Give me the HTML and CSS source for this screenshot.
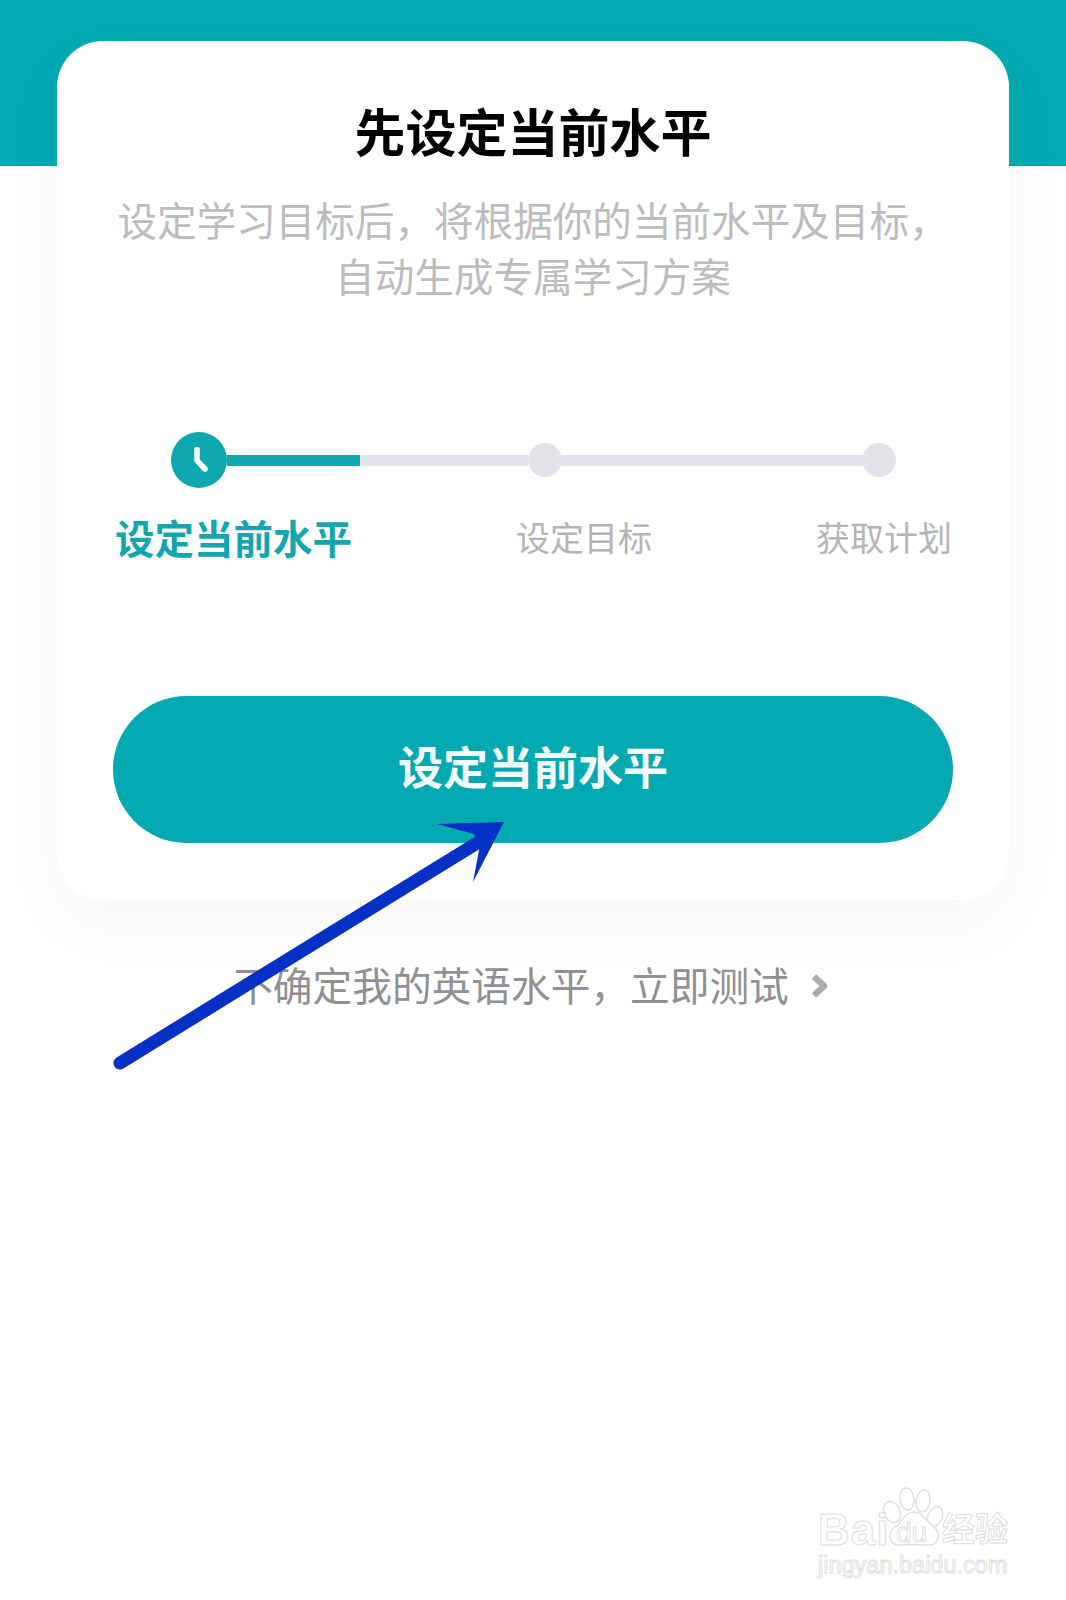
FILE: index.html
```html
<!DOCTYPE html>
<html lang="zh-CN">
  <head>
    <meta charset="UTF-8" />
    <meta name="viewport" content="width=device-width, initial-scale=1.0" />
    <title>先设定当前水平</title>
    <link rel="stylesheet" href="styles.css">
  </head>
  <body>
    <div class="page">
      <div class="band"></div>

      <div class="card">
        <h1>先设定当前水平</h1>
        <p class="intro">设定学习目标后，将根据你的当前水平及目标，<br />自动生成专属学习方案</p>

        <div class="track">
          <span class="step-icon">
            <svg width="56" height="56" viewBox="0 0 56 56">
              <path class="clock-hand" d="M26 17.5 L26 28.5 L34 37" />
            </svg>
          </span>
          <span class="bar bar-done"></span>
          <span class="bar bar-todo-a"></span>
          <span class="dot"></span>
          <span class="bar bar-todo-b"></span>
          <span class="dot"></span>
        </div>

        <div class="labels">
          <span class="label label-active">设定当前水平</span>
          <span class="label">设定目标</span>
          <span class="label">获取计划</span>
        </div>

        <button class="start" type="button">设定当前水平</button>
      </div>

      <a class="test-link">
        <span>不确定我的英语水平，立即测试</span>
        <svg width="18" height="26" viewBox="0 0 18 26">
          <path class="chevron" d="M4 3.5 L14 13 L4 22.5" />
        </svg>
      </a>

      <!-- annotation drawn over the screenshot -->
      <svg class="arrow" width="1066" height="1600" viewBox="0 0 1066 1600">
        <path class="arrow-line" d="M120 1063 L482 840" />
        <path class="arrow-head" d="M504 822 L437 824 L474 834 L480 845 L473 882 Z" />
      </svg>

      <div class="watermark">
        <svg class="paw" width="72" height="72" viewBox="0 0 72 72">
          <ellipse cx="7" cy="27" rx="8" ry="11" transform="rotate(-25 7 27)" />
          <ellipse cx="22" cy="14" rx="7" ry="11" transform="rotate(-8 22 14)" />
          <ellipse cx="38" cy="16" rx="7" ry="11" transform="rotate(10 38 16)" />
          <ellipse cx="50" cy="32" rx="7" ry="11" transform="rotate(25 50 32)" />
          <path d="M29 27 C38 27 42 38 50 43 C56 48 54 60 44 60 C36 60 24 59 14 60 C4 60 2 48 10 42 C17 38 20 27 29 27 Z" />
        </svg>
        <div class="wm-row">
          <span class="wm-bai">Bai</span>
          <span class="wm-du">du</span>
          <span class="wm-cn">经验</span>
        </div>
        <div class="wm-url">jingyan.baidu.com</div>
      </div>
    </div>
  </body>
</html>
```

FILE: styles.css
```css
* {
  margin: 0;
  padding: 0;
  box-sizing: border-box;
}

body {
  background-color: white;
  font-family: "Noto Sans CJK SC", "Liberation Sans", sans-serif;
}

.page {
  position: relative;
  width: 1066px;
  height: 1600px;
  overflow: hidden;
}

.band {
  height: 166px;
  margin-bottom: -125px;
  background-color: #02a9b1;
}

.card {
  position: relative;
  width: 952px;
  height: 859px;
  margin-left: 57px;
  padding: 59px 56px 0;
  border-radius: 46px;
  background-color: white;
  box-shadow: 0 24px 70px rgba(0, 0, 0, 0.035);
  text-align: center;
}

h1 {
  font-size: 51px;
  line-height: 60px;
  font-weight: 700;
  color: black;
}

.intro {
  margin-top: 31px;
  margin-left: -6px;
  margin-right: -6px;
  font-size: 39.6px;
  line-height: 56px;
  color: #bcbcbc;
}

.track {
  display: flex;
  align-items: center;
  height: 56px;
  margin-top: 129px;
  margin-left: 58px;
}

.step-icon {
  display: block;
  flex: none;
  width: 56px;
  height: 56px;
  border-radius: 50%;
  background-color: #0ca8ae;
}

.clock-hand {
  fill: none;
  stroke: white;
  stroke-width: 5.5;
  stroke-linecap: round;
  stroke-linejoin: round;
}

.bar {
  display: block;
  flex: none;
  height: 11px;
}

.bar-done {
  width: 133px;
  background-color: #0ca8ae;
}

.bar-todo-a {
  width: 168px;
  background-color: #e3e4e8;
}

.bar-todo-b {
  width: 300px;
  background-color: #e3e4e8;
}

.dot {
  display: block;
  flex: none;
  width: 34px;
  height: 34px;
  border-radius: 50%;
  background-color: #e3e4e8;
}

.labels {
  display: flex;
  justify-content: space-between;
  align-items: center;
  height: 50px;
  margin-top: 23px;
  padding: 0 1px 0 2px;
}

.label {
  font-size: 34px;
  color: #b4b4b4;
}

.label-active {
  font-size: 39.5px;
  font-weight: 700;
  color: #12a6ae;
}

.start {
  display: block;
  width: 840px;
  height: 147px;
  margin-top: 135px;
  padding-bottom: 8px;
  border: 0;
  border-radius: 74px;
  background-color: #02a9b1;
  font-family: inherit;
  font-size: 45px;
  font-weight: 700;
  color: #f4fbfb;
}

.test-link {
  display: flex;
  justify-content: center;
  align-items: center;
  gap: 21px;
  height: 50px;
  margin-top: 58px;
  padding-right: 5px;
  font-size: 39.7px;
  color: #8f8f94;
}

.test-link svg {
  margin-top: 6px;
}

.chevron {
  fill: none;
  stroke: #ababab;
  stroke-width: 6.5;
  stroke-linejoin: round;
}

.arrow {
  position: absolute;
  top: 0;
  left: 0;
}

.arrow-line {
  fill: none;
  stroke: #0530c6;
  stroke-width: 13;
  stroke-linecap: round;
}

.arrow-head {
  fill: #0530c6;
}

.watermark {
  position: absolute;
  left: 818px;
  top: 1485px;
  width: 195px;
  height: 95px;
}

.paw {
  position: absolute;
  left: 67px;
  top: 0;
  overflow: visible;
}

.paw ellipse,
.paw path {
  fill: white;
  stroke: #dedede;
  stroke-width: 1.5;
}

.wm-row {
  position: absolute;
  top: 24px;
  left: 0;
  width: 195px;
  height: 40px;
}

.wm-bai,
.wm-du,
.wm-cn,
.wm-url {
  position: absolute;
  color: white;
  -webkit-text-stroke: 1px #dedede;
  white-space: nowrap;
}

.wm-bai {
  left: 0;
  top: -1px;
  font-family: "Liberation Sans", sans-serif;
  font-size: 44px;
  line-height: 44px;
  font-weight: 700;
  letter-spacing: 1px;
}

.wm-du {
  left: 78px;
  top: 10px;
  font-family: "Liberation Sans", sans-serif;
  font-size: 28px;
  line-height: 28px;
}

.wm-cn {
  left: 124px;
  top: -2px;
  font-size: 33px;
  line-height: 40px;
  font-weight: 700;
}

.wm-url {
  left: 0;
  top: 68px;
  font-family: "Liberation Sans", sans-serif;
  font-size: 23.5px;
  line-height: 24px;
}
```
